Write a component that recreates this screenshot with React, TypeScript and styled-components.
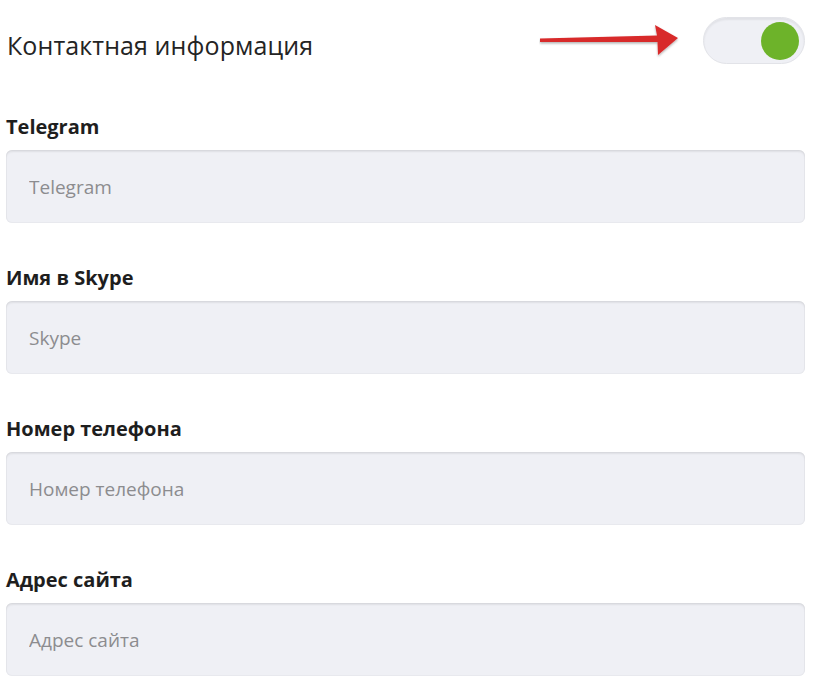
import React from 'react';
import styled, { createGlobalStyle } from 'styled-components';

const GlobalStyle = createGlobalStyle`
  html, body {
    margin: 0;
    padding: 0;
    background: #ffffff;
  }
  body {
    font-family: "Open Sans", "Liberation Sans", sans-serif;
    color: #222;
  }
`;

const Page = styled.div`
  width: 818px;
  height: 687px;
  overflow: hidden;
  box-sizing: border-box;
  padding: 0 13px 0 6px;
`;

const Header = styled.div`
  height: 90px;
  display: flex;
  align-items: center;
  justify-content: space-between;
`;

const Title = styled.h1`
  margin: 0 0 0 1px;
  font-size: 25px;
  font-weight: 400;
  color: #242424;
  letter-spacing: 0.1px;
`;

const Controls = styled.div`
  display: flex;
  align-items: center;
  gap: 22px;
  margin-bottom: 9px;
`;

const Toggle = styled.div`
  width: 102px;
  height: 47px;
  box-sizing: border-box;
  border-radius: 24px;
  background: #eff0f5;
  border: 1px solid #e2e3e8;
  box-shadow: inset 0 2px 2px rgba(0, 0, 0, 0.06);
  display: flex;
  align-items: center;
  justify-content: flex-end;
  padding-right: 5px;
`;

const Knob = styled.div`
  width: 38px;
  height: 38px;
  border-radius: 50%;
  background: #6db32a;
`;

const Fields = styled.div`
  margin-top: 24px;
`;

const Field = styled.div`
  display: flex;
  flex-direction: column;
  gap: 10px;
  margin-bottom: 42px;
`;

const Label = styled.label`
  font-size: 20px;
  font-weight: 700;
  color: #1e1e1e;
  line-height: 26px;
`;

const Input = styled.input`
  height: 73px;
  box-sizing: border-box;
  width: 100%;
  border: none;
  border-radius: 6px;
  background: #eff0f5;
  box-shadow: inset 0 2px 2px rgba(0, 0, 0, 0.07), inset 0 0 0 1px #e8e9ee;
  padding: 0 23px;
  font-family: "Open Sans", "Liberation Sans", sans-serif;
  font-size: 19px;
  color: #333;
  outline: none;
  &::placeholder {
    color: #8c8c8f;
  }
`;

const Arrow = () => (
  <svg width="142" height="36" viewBox="0 0 142 36">
    <defs>
      <filter id="sh" x="-10%" y="-30%" width="120%" height="160%">
        <feDropShadow dx="0" dy="1.5" stdDeviation="1" floodColor="#000" floodOpacity="0.3" />
      </filter>
    </defs>
    <path
      d="M1 15.5 L118 12.5 L116 2 L139 15 L119 32 L118.5 19 L1 19 Z"
      fill="#d82a2c"
      filter="url(#sh)"
    />
  </svg>
);

const fields = [
  { label: 'Telegram', placeholder: 'Telegram' },
  { label: 'Имя в Skype', placeholder: 'Skype' },
  { label: 'Номер телефона', placeholder: 'Номер телефона' },
  { label: 'Адрес сайта', placeholder: 'Адрес сайта' },
];

const App: React.FC = () => {
  return (
    <Page>
      <GlobalStyle />
      <Header>
        <Title>Контактная информация</Title>
        <Controls>
          <Arrow />
          <Toggle>
            <Knob />
          </Toggle>
        </Controls>
      </Header>
      <Fields>
        {fields.map((f) => (
          <Field key={f.label}>
            <Label>{f.label}</Label>
            <Input placeholder={f.placeholder} />
          </Field>
        ))}
      </Fields>
    </Page>
  );
};

export default App;
